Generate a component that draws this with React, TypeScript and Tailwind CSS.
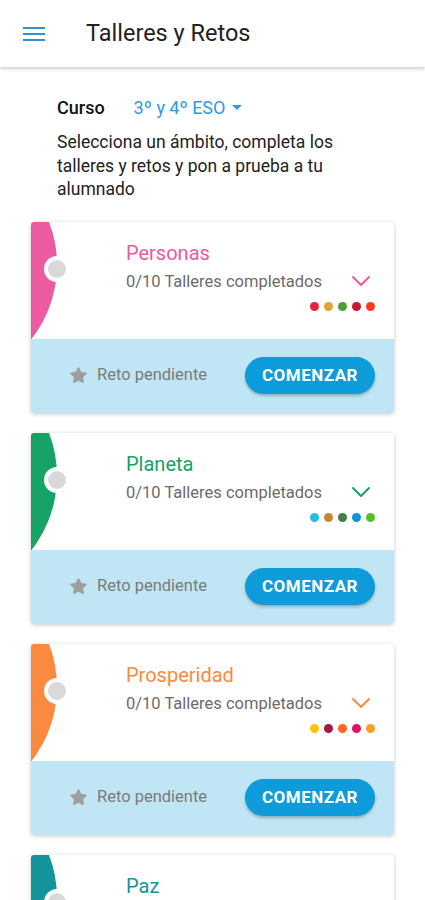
import { Star } from "lucide-react";

type Ambito = {
  name: string;
  color: string;
  dots: string[];
};

const AMBITOS: Ambito[] = [
  { name: "Personas", color: "#ec5a9f", dots: ["#e5243b", "#dda63a", "#4c9f38", "#c5192d", "#ff3a21"] },
  { name: "Planeta", color: "#17a266", dots: ["#26bde2", "#bf8b2e", "#3f7e44", "#0a97d9", "#56c02b"] },
  { name: "Prosperidad", color: "#fa8a40", dots: ["#fcc30b", "#a21942", "#fd6925", "#dd1367", "#fd9d24"] },
  { name: "Paz", color: "#13959b", dots: ["#00689d", "#00689d", "#00689d", "#00689d", "#00689d"] },
];

const Chevron = ({ color }: { color: string }) => (
  <svg width="20" height="12" viewBox="0 0 20 12" fill="none">
    <path d="M2 2l8 8 8-8" stroke={color} strokeWidth="2" strokeLinecap="round" strokeLinejoin="round" />
  </svg>
);

const AmbitoCard = ({ ambito }: { ambito: Ambito }) => {
  return (
    <div className="mb-5 overflow-hidden rounded-[3px] bg-white shadow-[0_1px_4px_rgba(0,0,0,0.22)]">
      <div className="relative h-[117px] overflow-hidden">
        <div
          className="absolute left-[-214px] top-[-77px] h-[240px] w-[240px] rounded-full"
          style={{ backgroundColor: ambito.color }}
        />
        <div className="absolute left-[13px] top-[34px] flex h-[26px] w-[26px] items-center justify-center rounded-full bg-white">
          <div className="h-[18px] w-[18px] rounded-full bg-[#d9d9d9]" />
        </div>

        <div className="absolute left-[95px] right-[19px] top-[17px]">
          <div className="text-[20px] leading-[28px]" style={{ color: ambito.color }}>
            {ambito.name}
          </div>
          <div className="mt-[3px] flex items-center justify-between">
            <span className="text-[16.5px] text-[#6b6b6b]">0/10 Talleres completados</span>
            <span className="mr-[4px] mt-[-2px]">
              <Chevron color={ambito.color} />
            </span>
          </div>
          <div className="mt-[8px] flex justify-end gap-[5px]">
            {ambito.dots.map((c, i) => (
              <span key={i} className="h-[9px] w-[9px] rounded-full" style={{ backgroundColor: c }} />
            ))}
          </div>
        </div>
      </div>

      <div className="flex h-[74px] items-center justify-between bg-[#c0e6f5] pl-[38px] pr-[19px]">
        <div className="flex items-center gap-[9px]">
          <Star className="h-[19px] w-[19px] fill-[#9e9e9e] text-[#9e9e9e]" strokeWidth={1} />
          <span className="text-[16.5px] text-[#7a7a7a]">Reto pendiente</span>
        </div>
        <button className="h-[37px] w-[130px] rounded-full bg-[#0d9bd9] text-[17px] font-bold tracking-[0.5px] text-white shadow-[0_2px_3px_rgba(0,0,0,0.25)]">
          COMENZAR
        </button>
      </div>
    </div>
  );
};

export default function App() {
  return (
    <div className="h-[900px] overflow-hidden bg-white font-['Roboto',sans-serif]">
      <header className="relative z-10 flex h-[67px] items-center bg-white shadow-[0_2px_3px_rgba(0,0,0,0.18)]">
        <div className="ml-[23px] flex w-[22px] flex-col gap-[4px]">
          <span className="h-[2px] w-full bg-[#2d93d6]" />
          <span className="h-[2px] w-full bg-[#2d93d6]" />
          <span className="h-[2px] w-full bg-[#2d93d6]" />
        </div>
        <h1 className="ml-[41px] text-[23.5px] text-[#222]">Talleres y Retos</h1>
      </header>

      <main className="px-[31px] pt-[27px]">
        <div className="pl-[26px] pr-[8px]">
          <div className="flex items-center">
            <span className="text-[18px] font-medium text-[#111]">Curso</span>
            <span className="ml-[29px] text-[18px] text-[#2d9be0]">3º y 4º ESO</span>
            <svg className="ml-[7px]" width="10" height="6" viewBox="0 0 10 6">
              <path d="M0 0h10L5 5z" fill="#2d9be0" />
            </svg>
          </div>
          <p className="mt-[10px] text-[17.5px] leading-[23.5px] text-[#222]">
            Selecciona un ámbito, completa los talleres y retos y pon a prueba a tu alumnado
          </p>
        </div>

        <div className="mt-[20px]">
          {AMBITOS.map((a) => (
            <AmbitoCard key={a.name} ambito={a} />
          ))}
        </div>
      </main>
    </div>
  );
}
